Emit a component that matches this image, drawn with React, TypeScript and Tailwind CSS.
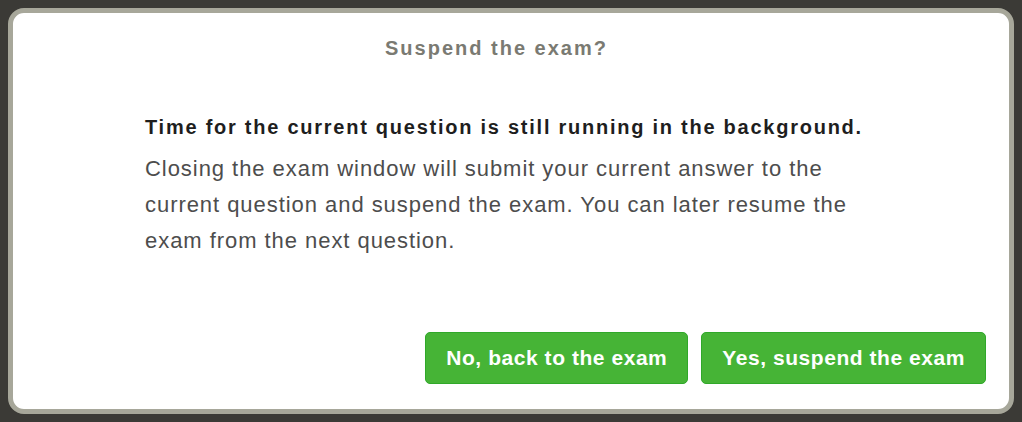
import React from "react";

const font = { fontFamily: '"Liberation Sans", Arial, sans-serif' };

export default function App() {
  return (
    <div className="h-[422px] w-[1022px] bg-[#3b3a36] p-[8px]" style={font}>
      <div className="flex h-[406px] w-[1006px] flex-col rounded-[16px] border-[5px] border-[#a7a79a] bg-white">
        <div className="flex justify-center pr-[29px] pt-[22px]">
          <h1 className="text-[20px] font-bold leading-[26px] tracking-[2px] text-[#7a7a72]">
            Suspend the exam?
          </h1>
        </div>
        <div className="pl-[132px] pt-[53px]">
          <p className="text-[20px] font-bold leading-[26px] tracking-[1.75px] text-[#1e1e1e]">
            Time for the current question is still running in the background.
          </p>
          <p className="mt-[11px] w-[720px] text-[22px] leading-[36px] tracking-[0.95px] text-[#4d4d4d]">
            Closing the exam window will submit your current answer to the
            current question and suspend the exam. You can later resume the
            exam from the next question.
          </p>
        </div>
        <div className="mt-auto flex justify-end gap-[13px] pb-[25px] pr-[23px]">
          <button className="h-[52px] rounded-[5px] border border-[#30a82a] bg-[#46b436] px-[20px] text-[21px] font-bold tracking-[0.55px] text-white">
            No, back to the exam
          </button>
          <button className="h-[52px] rounded-[5px] border border-[#30a82a] bg-[#46b436] px-[20px] text-[21px] font-bold tracking-[0.55px] text-white">
            Yes, suspend the exam
          </button>
        </div>
      </div>
    </div>
  );
}
